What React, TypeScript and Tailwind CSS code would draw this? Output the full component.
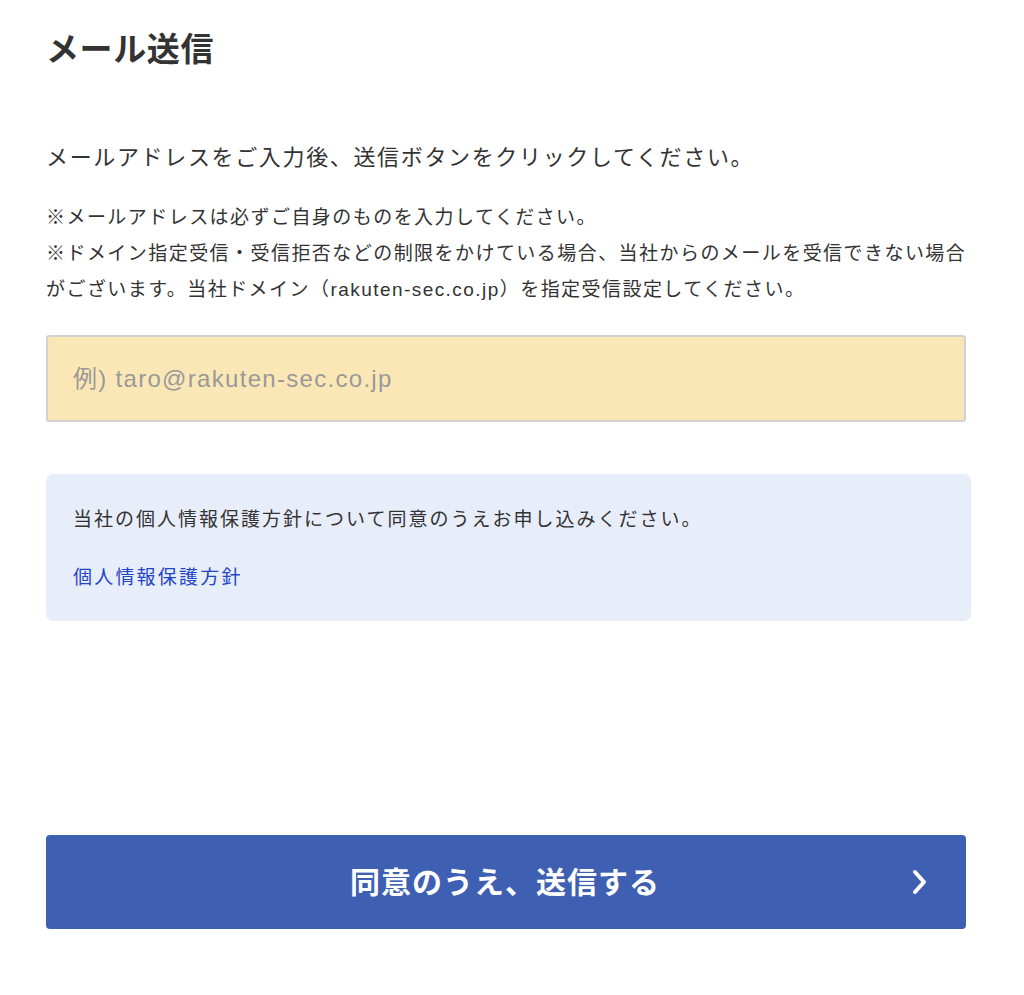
const jp = "font-['Liberation_Sans','Noto_Sans_CJK_JP',sans-serif]";

const ChevronRight = () => (
  <svg width="16" height="26" viewBox="0 0 16 26" fill="none" aria-hidden="true">
    <path d="M3 3l9 10-9 10" stroke="#fff" strokeWidth="4" strokeLinecap="round" strokeLinejoin="round" />
  </svg>
);

export default function App() {
  return (
    <div className={`min-h-[995px] bg-white px-[46px] text-[#333] ${jp}`}>
      <h1 className="pt-[30px] text-[33px] font-bold leading-[40px] tracking-[0.6px]">メール送信</h1>

      <p className="mt-[71px] text-[22px] leading-[34px] tracking-[1.65px]">
        メールアドレスをご入力後、送信ボタンをクリックしてください。
      </p>

      <p className="mt-[25px] text-[19px] leading-[36px] tracking-[1.45px]">
        ※メールアドレスは必ずご自身のものを入力してください。
        <br />
        ※ドメイン指定受信・受信拒否などの制限をかけている場合、当社からのメールを受信できない場合
        <br />
        がございます。当社ドメイン（rakuten-sec.co.jp）を指定受信設定してください。
      </p>

      <input
        type="email"
        placeholder="例) taro@rakuten-sec.co.jp"
        className="mt-[27px] block h-[87px] w-[920px] rounded-[3px] border-2 border-[#d2d2d2] bg-[#fbe7b6] px-[25px] text-[24px] tracking-[1.3px] text-[#333] outline-none placeholder:text-[#999]"
      />

      <div className="mt-[52px] w-[925px] rounded-[7px] bg-[#e8edfa] px-[27px] pt-[31px] pb-[28px]">
        <p className="text-[19px] leading-[30px] tracking-[2px]">
          当社の個人情報保護方針について同意のうえお申し込みください。
        </p>
        <a href="#" className="mt-[28px] block text-[19px] leading-[30px] tracking-[2.2px] text-[#1f45c9]">
          個人情報保護方針
        </a>
      </div>

      <button
        type="button"
        className="mt-[214px] flex h-[94px] w-[920px] items-center rounded-[4px] bg-[#3f5fb3] text-white"
      >
        <span className="flex-1 pl-[52px] text-center text-[30px] font-bold tracking-[1px]">同意のうえ、送信する</span>
        <span className="pr-[38px]">
          <ChevronRight />
        </span>
      </button>
    </div>
  );
}
